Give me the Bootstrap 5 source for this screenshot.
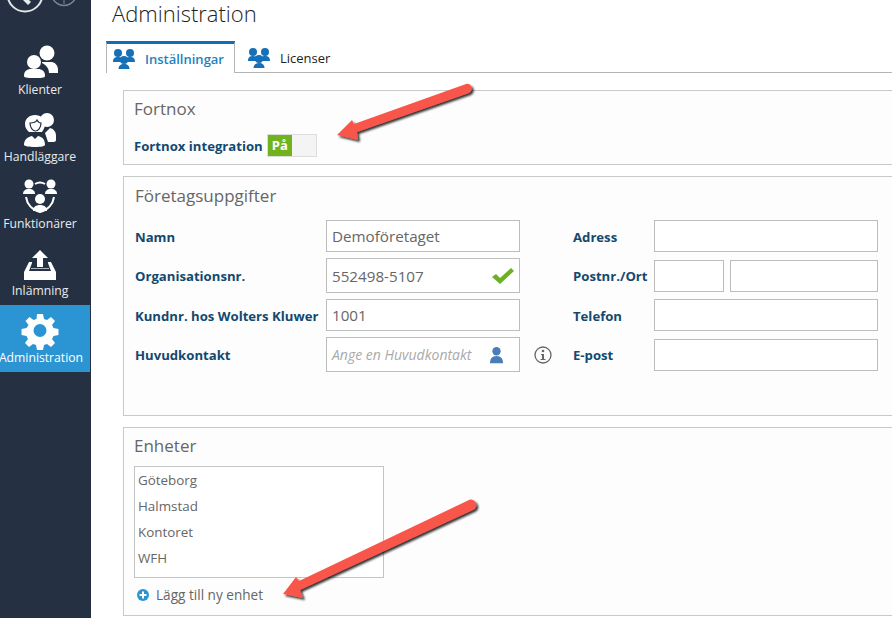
<!DOCTYPE html>
<html lang="sv"><head><meta charset="utf-8"><title>Administration</title>
<link rel="stylesheet" href="https://cdn.jsdelivr.net/npm/bootstrap@5.3.0/dist/css/bootstrap.min.css">
<style>
html,body{height:618px;overflow:hidden;background:#fff}
body{font-family:"Open Sans","Noto Sans",sans-serif;font-size:13px;color:#666}
.shell{width:892px;height:618px;overflow:hidden;position:relative}
.side{width:91px;background:#253142;flex:none;height:618px;overflow:hidden;padding-top:37px}
.side-top{height:0;position:relative}
.side-top svg{position:absolute;left:0;top:-37px}
.side-item{width:90px;height:67px;color:#e8ebee;font-size:12.2px;line-height:14px;white-space:nowrap;padding:8px 10px 0 0}
.side-item svg{display:block;height:37px;flex:none;margin-bottom:1px}
.side-item.on{background:#2b95d3;color:#fff;padding-right:8px}
.main-col{width:801px;flex:none;padding-left:15px}
.page-title{font-size:22px;font-weight:300;color:#222;line-height:27px;margin:0 0 0 6px}
.tabbar{height:46px;border-bottom:1px solid #b5b5b5;padding-top:14px}
.tab-x{height:32px;padding:4px 10px 0 8px;font-size:13px;color:#222}
.tab-x.on{border:1px solid #b5b5b5;border-top:3px solid #0f6fb3;border-bottom:0;background:#fff;color:#1f7fc0;font-weight:600;width:129px;padding:2px 0 0 6px;margin-right:5px}
.tab-x svg{margin-right:10px;position:relative;top:-1px}
.pane{border:1px solid #c9c9c9;background:#fdfdfd;margin-left:17px;width:790px;padding-left:10px}
.pane h5{font-size:17px;font-weight:400;color:#666;margin:0;line-height:22px}
.lbl{color:#12496f;font-weight:700;font-size:13.15px;white-space:nowrap;padding-top:3px}
.switch-x{width:50px;height:23px;border:1px solid #ddd;background:#f4f4f4;display:flex}
.switch-x span{width:24px;background:#72b31d;color:#fff;font-weight:700;font-size:13px;text-align:center;line-height:21px}
.field-x{border:1px solid #bdbdbd;background:#fff;height:32px;font-size:15.2px;color:#666;padding-left:5px;line-height:30px}
.form-x{display:grid;grid-template-columns:191px 194px 53px 81px 224px;row-gap:6px;align-items:center;margin-top:13px}
.tall{height:35px}
.hint{font-style:italic;color:#aaa;font-size:14px}
.units{width:250px;height:112px;border:1px solid #c4c4c4;background:#fff;padding:0 3px;margin-top:9px}
.units div{height:26px;line-height:26px;font-size:13.4px;color:#666}
.add-x{font-size:13.6px;color:#666;margin-top:7px;margin-left:3px}
.info-x{position:relative;left:-4px}
.arrow{position:absolute;left:0;top:0;pointer-events:none}
</style></head><body>
<div class="shell d-flex">
<nav class="side d-flex flex-column align-items-start">
  <div class="side-top"><svg width="91" height="37" viewBox="0 0 91 37"><g fill="none"><circle cx="25" cy="-6" r="17.500" stroke="#e3e6ea" stroke-width="2"/><circle cx="64" cy="-7" r="12.500" stroke="#7c8692" stroke-width="1.500"/></g><path d="M20 -3l8 8 3-3-6-6z" fill="#e8ebee"/><path d="M64 -1v5" stroke="#7c8692"/></svg></div>
  <div class="side-item d-flex flex-column align-items-center"><svg width="40" height="37" viewBox="0 0 40 37"><g fill="#fff"><circle cx="27" cy="8" r="7.500"/><path d="M22 17h10c4 1 6 4 6 8v3h-9c0-5-3-8-7-10z"/><circle cx="14" cy="17" r="7"/><path d="M4 31c0-5 3-7 7-7h7c4 0 7 2 7 7 0 2-5 2-10 2s-11 0-11-2z"/></g></svg>Klienter</div>
  <div class="side-item d-flex flex-column align-items-center"><svg width="40" height="37" viewBox="0 0 40 37"><g fill="#fff"><circle cx="27" cy="8" r="7"/><path d="M30 16c4 1 6 4 6 8v4c0 2-2 2-5 2h-3l-3-9z"/><path d="M15 3c6 0 10 4 10 9 0 4-2 6-3 8H9c-2-2-4-4-4-8 0-5 4-9 10-9z"/><path d="M4 33c0-5 3-8 8-9l3 3 3-3c5 1 7 4 7 9 0 1-4 2-10 2s-11-1-11-2z"/></g><path d="M10 11c3 0 6-1 7-3 1 2 2 3 4 3 0 5-3 8-5.500 8S10 16 10 11z" fill="#fff" stroke="#253142" stroke-width="1.200"/></svg>Handläggare</div>
  <div class="side-item d-flex flex-column align-items-center"><svg width="40" height="37" viewBox="0 0 40 37"><g fill="#fff"><circle cx="9" cy="5" r="4.500"/><path d="M3 15c0-3 2-5 6-5s6 2 6 5z"/><circle cx="31" cy="5" r="4.500"/><path d="M25 15c0-3 2-5 6-5s6 2 6 5z"/><circle cx="20" cy="20" r="5"/><path d="M13 32c0-4 3-6 7-6s7 2 7 6z"/></g><path d="M15 5q5-3 10 0M6 18c1 7 6 13 14 15 8-2 13-8 14-15" fill="none" stroke="#fff" stroke-width="2"/></svg>Funktionärer</div>
  <div class="side-item d-flex flex-column align-items-center"><svg width="40" height="37" viewBox="0 0 40 37"><path d="M20 4l8 8h-5v9h-6v-9h-5z" fill="#fff"/><path d="M9 16h3v1l-3 8h22l-3-8v-1h3l5 10v8H4v-8z" fill="#fff"/><path d="M11 22h18v1H11z" fill="#aab4c0"/></svg>Inlämning</div>
  <div class="side-item on d-flex flex-column align-items-center"><svg width="40" height="37" viewBox="1 2 40 37"><path fill="#fff" fill-rule="evenodd" d="M17 3h6l1 5 3 1 4-3 4 4-3 4 1.500 3 5 1v6l-5 1-1.500 3 3 4-4 4-4-3-3 1-1 5h-6l-1-5-3-1-4 3-4-4 3-4-1.500-3-5-1v-6l5-1L8.500 14l-3-4 4-4 4 3 3-1zM20 13a6.500 6.500 0 1 0 0 13 6.500 6.500 0 0 0 0-13z"/></svg>Administration</div>
</nav>
<main class="main-col">
  <h1 class="page-title">Administration</h1>
  <div class="tabbar d-flex">
    <div class="tab-x on d-flex align-items-center"><svg width="22" height="20" viewBox="0 0 22 20"><g fill="#1670b8"><circle cx="5" cy="4" r="4"/><circle cx="17" cy="4" r="4"/><path d="M0 13c0-4 2-5 5-5s5 1 5 5zM12 13c0-4 2-5 5-5s5 1 5 5z"/><circle cx="11" cy="11" r="4"/><path d="M5.500 20c0-3 2-5 5.500-5s5.500 2 5.500 5z"/></g></svg>Inställningar</div>
    <div class="tab-x d-flex align-items-center"><svg width="22" height="20" viewBox="0 0 22 20"><g fill="#1670b8"><circle cx="5" cy="4" r="4"/><circle cx="17" cy="4" r="4"/><path d="M0 13c0-4 2-5 5-5s5 1 5 5zM12 13c0-4 2-5 5-5s5 1 5 5z"/><circle cx="11" cy="11" r="4"/><path d="M5.500 20c0-3 2-5 5.500-5s5.500 2 5.500 5z"/></g></svg>Licenser</div>
  </div>
  <section class="pane" style="margin-top:17px;height:75px;padding-top:7px">
    <h5>Fortnox</h5>
    <div class="d-flex align-items-center" style="margin-top:14px"><span class="lbl me-1">Fortnox integration</span><div class="switch-x"><span>På</span></div></div>
  </section>
  <section class="pane" style="margin-top:11px;height:240px;padding-top:8px;padding-left:11px">
    <h5>Företagsuppgifter</h5>
    <div class="form-x">
      <span class="lbl">Namn</span><div class="field-x">Demoföretaget</div><span></span><span class="lbl">Adress</span><div class="field-x"></div>
      <span class="lbl">Organisationsnr.</span><div class="field-x tall d-flex justify-content-between align-items-center"><span>552498-5107</span><svg class="me-1" width="24" height="18" viewBox="0 0 24 18"><path d="M1 10l4-3 4 4L20 1l3 3L9 17z" fill="#6cb024"/></svg></div><span></span><span class="lbl">Postnr./Ort</span><div class="d-flex" style="gap:6px"><div class="field-x" style="width:70px"></div><div class="field-x flex-grow-1"></div></div>
      <span class="lbl">Kundnr. hos Wolters Kluwer</span><div class="field-x">1001</div><span></span><span class="lbl">Telefon</span><div class="field-x"></div>
      <span class="lbl">Huvudkontakt</span><div class="field-x tall d-flex justify-content-between align-items-center"><span class="hint">Ange en Huvudkontakt</span><svg class="me-3" width="13" height="18" viewBox="0 0 14 18"><circle cx="7" cy="5" r="4.500" fill="#4a7db8"/><path d="M0 18c0-5 2-8 7-8s7 3 7 8z" fill="#4a7db8"/></svg></div>
      <span class="d-flex justify-content-center"><svg class="info-x" width="18" height="18" viewBox="0 0 18 18"><circle cx="9" cy="9" r="8" fill="none" stroke="#666" stroke-width="1.300"/><circle cx="9" cy="5" r="1.300" fill="#666"/><path d="M7 8h3v5h1.500v1h-5v-1H8V9H7z" fill="#666"/></svg></span><span class="lbl">E-post</span><div class="field-x"></div>
    </div>
  </section>
  <section class="pane" style="margin-top:11px;height:189px;padding-top:7px">
    <h5>Enheter</h5>
    <div class="units"><div>Göteborg</div><div>Halmstad</div><div>Kontoret</div><div>WFH</div></div>
    <div class="add-x d-flex align-items-center"><svg style="margin-right:7px" width="12" height="12" viewBox="0 0 12 12"><circle cx="6" cy="6" r="6" fill="#2b95d3"/><path d="M5 2.500h2V5h2.500v2H7v2.500H5V7H2.500V5H5z" fill="#fff"/></svg>Lägg till ny enhet</div>
  </section>
</main>
<svg class="arrow" width="892" height="618" viewBox="0 0 892 618"><defs><filter id="sh" x="-10%" y="-20%" width="125%" height="150%"><feDropShadow dx="2" dy="2" stdDeviation="1.200" flood-color="#000" flood-opacity=".8"/></filter></defs>
<g fill="#f9574b" filter="url(#sh)"><path d="M466 84c5-1.500 8.500 6 3 9L357 132l1 8-21-5 15-15 2 4z"/><path d="M469 500c5-2.500 10.500 5.500 5 9.500L300 590l3 8-20-4 13-17 3 4z"/></g></svg>
</div>
</body></html>
